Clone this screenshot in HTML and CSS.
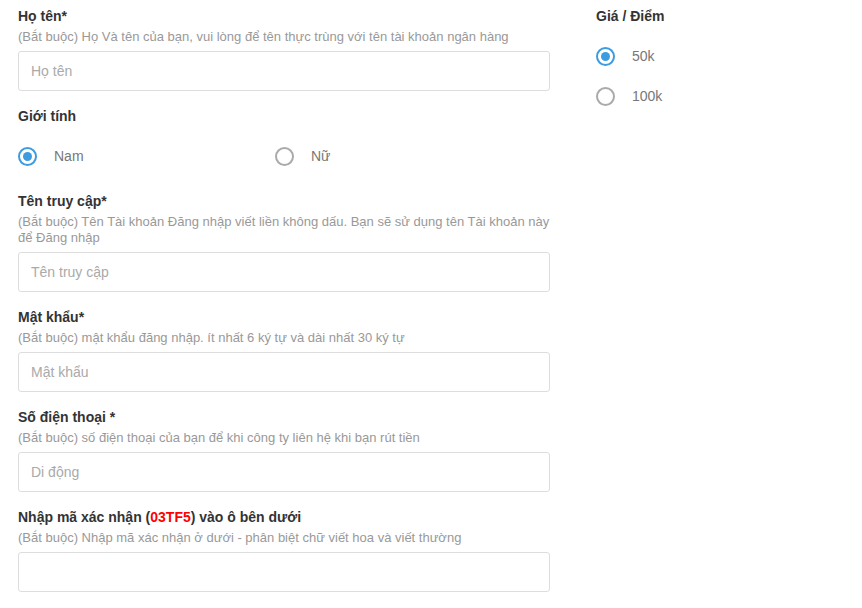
FILE: index.html
```html
<!DOCTYPE html>
<html>
	<head>
		<meta charset="utf-8">
		<title>Đăng ký</title>
		<link rel="stylesheet" href="styles.css">
	</head>
	<body>
		<div class="page">
			<form class="form-left">
				<div class="group">
					<label class="label">Họ tên*</label>
					<p class="help">(Bắt buộc) Họ Và tên của bạn, vui lòng để tên thực trùng với tên tài khoản ngân hàng</p>
					<input type="text" class="input" placeholder="Họ tên">
				</div>
				<div class="group">
					<label class="label">Giới tính</label>
					<div class="radio-row">
						<label class="radio"><input type="radio" name="sex" checked><span>Nam</span></label>
						<label class="radio"><input type="radio" name="sex"><span>Nữ</span></label>
					</div>
				</div>
				<div class="group">
					<label class="label">Tên truy cập*</label>
					<p class="help">(Bắt buộc) Tên Tài khoản Đăng nhập viết liền không dấu. Bạn sẽ sử dụng tên Tài khoản này để Đăng nhập</p>
					<input type="text" class="input" placeholder="Tên truy cập">
				</div>
				<div class="group">
					<label class="label">Mật khẩu*</label>
					<p class="help">(Bắt buộc) mật khẩu đăng nhập. ít nhất 6 ký tự và dài nhất 30 ký tự</p>
					<input type="password" class="input" placeholder="Mật khẩu">
				</div>
				<div class="group">
					<label class="label">Số điện thoại *</label>
					<p class="help">(Bắt buộc) số điện thoại của bạn để khi công ty liên hệ khi bạn rút tiền</p>
					<input type="text" class="input" placeholder="Di động">
				</div>
				<div class="group">
					<label class="label">Nhập mã xác nhận (<span class="code">03TF5</span>) vào ô bên dưới</label>
					<p class="help">(Bắt buộc) Nhập mã xác nhận ở dưới - phân biệt chữ viết hoa và viết thường</p>
					<input type="text" class="input">
				</div>
			</form>
			<div class="form-right">
				<label class="label">Giá / Điểm</label>
				<div class="radio-list">
					<label class="radio"><input type="radio" name="price" checked><span>50k</span></label>
					<label class="radio"><input type="radio" name="price"><span>100k</span></label>
				</div>
			</div>
		</div>
	</body>
</html>
```

FILE: styles.css
```css
*{
	margin: 0;
	padding: 0;
	box-sizing: border-box;
}
body{
	font-family: "Liberation Sans", Arial, sans-serif;
	color: #333;
	background: #fff;
}
.page{
	display: flex;
	padding: 6px 0 0 18px;
}
.form-left{
	width: 532px;
}
.form-right{
	margin-left: 46px;
}
.group{
	margin-bottom: 15px;
}
.label{
	display: block;
	font-size: 14px;
	font-weight: bold;
	line-height: 20px;
	color: #333;
}
.code{
	color: #f00;
}
.help{
	font-size: 13px;
	line-height: 16px;
	color: #999;
	margin-top: 3px;
}
.input{
	display: block;
	width: 532px;
	height: 40px;
	margin-top: 6px;
	padding: 0 12px;
	border: 1px solid #ddd;
	border-radius: 3px;
	font-family: inherit;
	font-size: 14px;
	color: #555;
	outline: none;
}
.input::placeholder{
	color: #aaa;
}
.radio-row{
	display: grid;
	grid-template-columns: 257px 1fr;
	margin-top: 20px;
	padding-bottom: 10px;
}
.radio-list{
	display: flex;
	flex-direction: column;
	gap: 20px;
	margin-top: 20px;
}
.radio{
	display: flex;
	align-items: center;
	height: 20px;
	font-size: 14px;
	color: #777;
	cursor: pointer;
}
.radio input{
	appearance: none;
	-webkit-appearance: none;
	width: 19px;
	height: 19px;
	border: 2px solid #aaa;
	border-radius: 50%;
	margin-right: 17px;
	position: relative;
	flex: none;
}
.radio input:checked{
	border-color: #3d9ce0;
}
.radio input:checked::after{
	content: "";
	position: absolute;
	left: 3px;
	top: 3px;
	width: 9px;
	height: 9px;
	border-radius: 50%;
	background: #3d9ce0;
}
```
